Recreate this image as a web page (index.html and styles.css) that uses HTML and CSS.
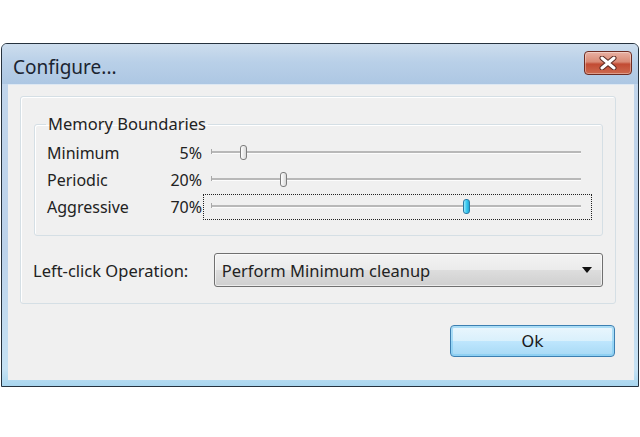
FILE: index.html
```html
<!DOCTYPE html>
<html>
<head>
<meta charset="utf-8">
<title>Configure...</title>
<link rel="stylesheet" href="styles.css">
</head>
<body>

<div class="window">
  <div class="titlebar">
    <span class="title">Configure...</span>
    <button class="close" type="button">
      <svg width="20" height="14" viewBox="0 0 20 14">
        <path d="M4 2 L16 12 M16 2 L4 12" stroke="#5a2a22" stroke-width="5" stroke-linecap="round"/>
        <path d="M4 2 L16 12 M16 2 L4 12" stroke="#fff" stroke-width="3" stroke-linecap="round"/>
      </svg>
    </button>
  </div>

  <div class="client">
    <div class="panel">
      <fieldset class="group">
        <legend>Memory Boundaries</legend>

        <div class="row">
          <span class="name">Minimum</span>
          <span class="pct">5%</span>
          <div class="slider">
            <div class="track"></div>
            <div class="thumb" style="left:36px"></div>
          </div>
        </div>

        <div class="row">
          <span class="name">Periodic</span>
          <span class="pct">20%</span>
          <div class="slider">
            <div class="track"></div>
            <div class="thumb" style="left:76px"></div>
          </div>
        </div>

        <div class="row">
          <span class="name">Aggressive</span>
          <span class="pct">70%</span>
          <div class="slider focused">
            <div class="track"></div>
            <div class="thumb" style="left:259px"></div>
          </div>
        </div>
      </fieldset>

      <div class="op-row">
        <label class="op-label">Left-click Operation:</label>
        <div class="combo">
          <span>Perform Minimum cleanup</span>
          <span class="arrow"></span>
        </div>
      </div>
    </div>

    <div class="actions">
      <button class="ok" type="button">Ok</button>
    </div>
  </div>
</div>

</body>
</html>
```

FILE: styles.css
```css
body {
   margin: 0;
   background-color: white;
   font-family: "Noto Sans", "DejaVu Sans", sans-serif;
   font-size: 16px;
   color: #222;
}

/* window frame */

.window {
   width: 626px;
   margin: 43px 0 0 1px;
   border: 1px solid #26323e;
   border-radius: 6px 6px 0 0;
   padding: 0 4px 6px 6px;
   background: linear-gradient(to bottom, #c2d6ec 0, #bcd2ea 60%, #c6e2f4 95%, #a9d6ef 100%);
}

.titlebar {
   height: 40px;
   margin-left: -6px;
   margin-right: -4px;
   display: flex;
   align-items: center;
   justify-content: space-between;
   padding: 0 6px 0 11px;
   background: linear-gradient(to bottom, #cddded 0, #b9d0e8 45%, #adc7e3 100%);
   border-radius: 5px 5px 0 0;
}

.title {
   font-size: 19px;
   color: #1b2430;
   padding-top: 6px;
}

.close {
   width: 48px;
   height: 24px;
   margin-top: -2px;
   padding: 0;
   border: 1px solid #6e2c22;
   border-radius: 4px;
   background: linear-gradient(to bottom, #e9b1a3 0, #d98a75 45%, #c24b33 55%, #cd6a4f 100%);
   box-shadow: inset 0 0 0 1px rgba(255, 255, 255, 0.35);
   display: flex;
   align-items: center;
   justify-content: center;
}

.client {
   height: 296px;
   background-color: #f0f0f0;
   border-top: 1px solid #dde8f3;
   box-sizing: border-box;
   padding: 11px 0 0 12px;
}

/* outer and inner group boxes */

.panel {
   width: 596px;
   box-sizing: border-box;
   border: 1px solid #d5dfe5;
   border-radius: 3px;
   box-shadow: inset 1px 1px 0 #fff;
   padding: 17px 12px 16px 12px;
}

.group {
   margin: 0 1px;
   padding: 5px 10px 15px 12px;
   border: 1px solid #d5dfe5;
   border-radius: 3px;
   box-shadow: inset 1px 1px 0 #fff;
}

.group legend {
   padding: 0 2px;
   margin-left: -1px;
   line-height: 20px;
   font-size: 16.5px;
}

.row {
   display: flex;
   align-items: center;
   height: 27px;
}

.name {
   width: 118px;
}

.pct {
   width: 37px;
   text-align: right;
}

/* trackbars */

.slider {
   position: relative;
   width: 389px;
   height: 26px;
   margin-left: 1px;
   box-sizing: border-box;
   border: 1px dotted transparent;
}

.slider.focused {
   border-color: #222;
}

.track {
   position: absolute;
   left: 7px;
   right: 10px;
   top: 10px;
   height: 2px;
   background-color: #b8b8b8;
   border-bottom: 1px solid #fcfcfc;
}

.track::before {
   content: "";
   position: absolute;
   left: 0;
   top: -2px;
   width: 1px;
   height: 5px;
   background-color: #a8a8a8;
}

.thumb {
   position: absolute;
   top: 4px;
   width: 5px;
   height: 13px;
   border: 1px solid #7d7d7d;
   border-radius: 3px;
   background: linear-gradient(to right, #ffffff 0, #ececec 50%, #d8d8d8 100%);
}

.focused .thumb {
   border-color: #2a7aa4;
   background: linear-gradient(to right, #9ae6fb 0, #3ccbf1 50%, #23a8d6 100%);
}

/* combo box */

.op-row {
   display: flex;
   align-items: center;
   margin-top: 17px;
}

.op-label {
   width: 181px;
   font-size: 16.5px;
}

.combo {
   width: 390px;
   height: 34px;
   box-sizing: border-box;
   border: 1px solid #707070;
   border-radius: 3px;
   background: linear-gradient(to bottom, #f3f3f3 0, #ebebeb 50%, #dddddd 51%, #cfcfcf 100%);
   box-shadow: inset 0 0 0 1px rgba(255, 255, 255, 0.6);
   display: flex;
   align-items: center;
   justify-content: space-between;
   padding: 0 10px 0 7px;
   font-size: 16.5px;
}

.arrow {
   width: 0;
   height: 0;
   border-left: 5px solid transparent;
   border-right: 5px solid transparent;
   border-top: 6px solid #111;
}

/* dialog buttons */

.actions {
   display: flex;
   justify-content: flex-end;
   padding: 21px 19px 0 0;
}

.ok {
   width: 165px;
   height: 32px;
   border: 1px solid #3c7fb1;
   border-radius: 4px;
   background: linear-gradient(to bottom, #eaf6fd 0, #d9f0fc 50%, #bee6fd 51%, #a7d9f5 100%);
   box-shadow: inset 0 0 0 2px rgba(120, 200, 240, 0.55);
   font-family: "DejaVu Sans", sans-serif;
   font-size: 16px;
   color: #1a1a1a;
}
```
